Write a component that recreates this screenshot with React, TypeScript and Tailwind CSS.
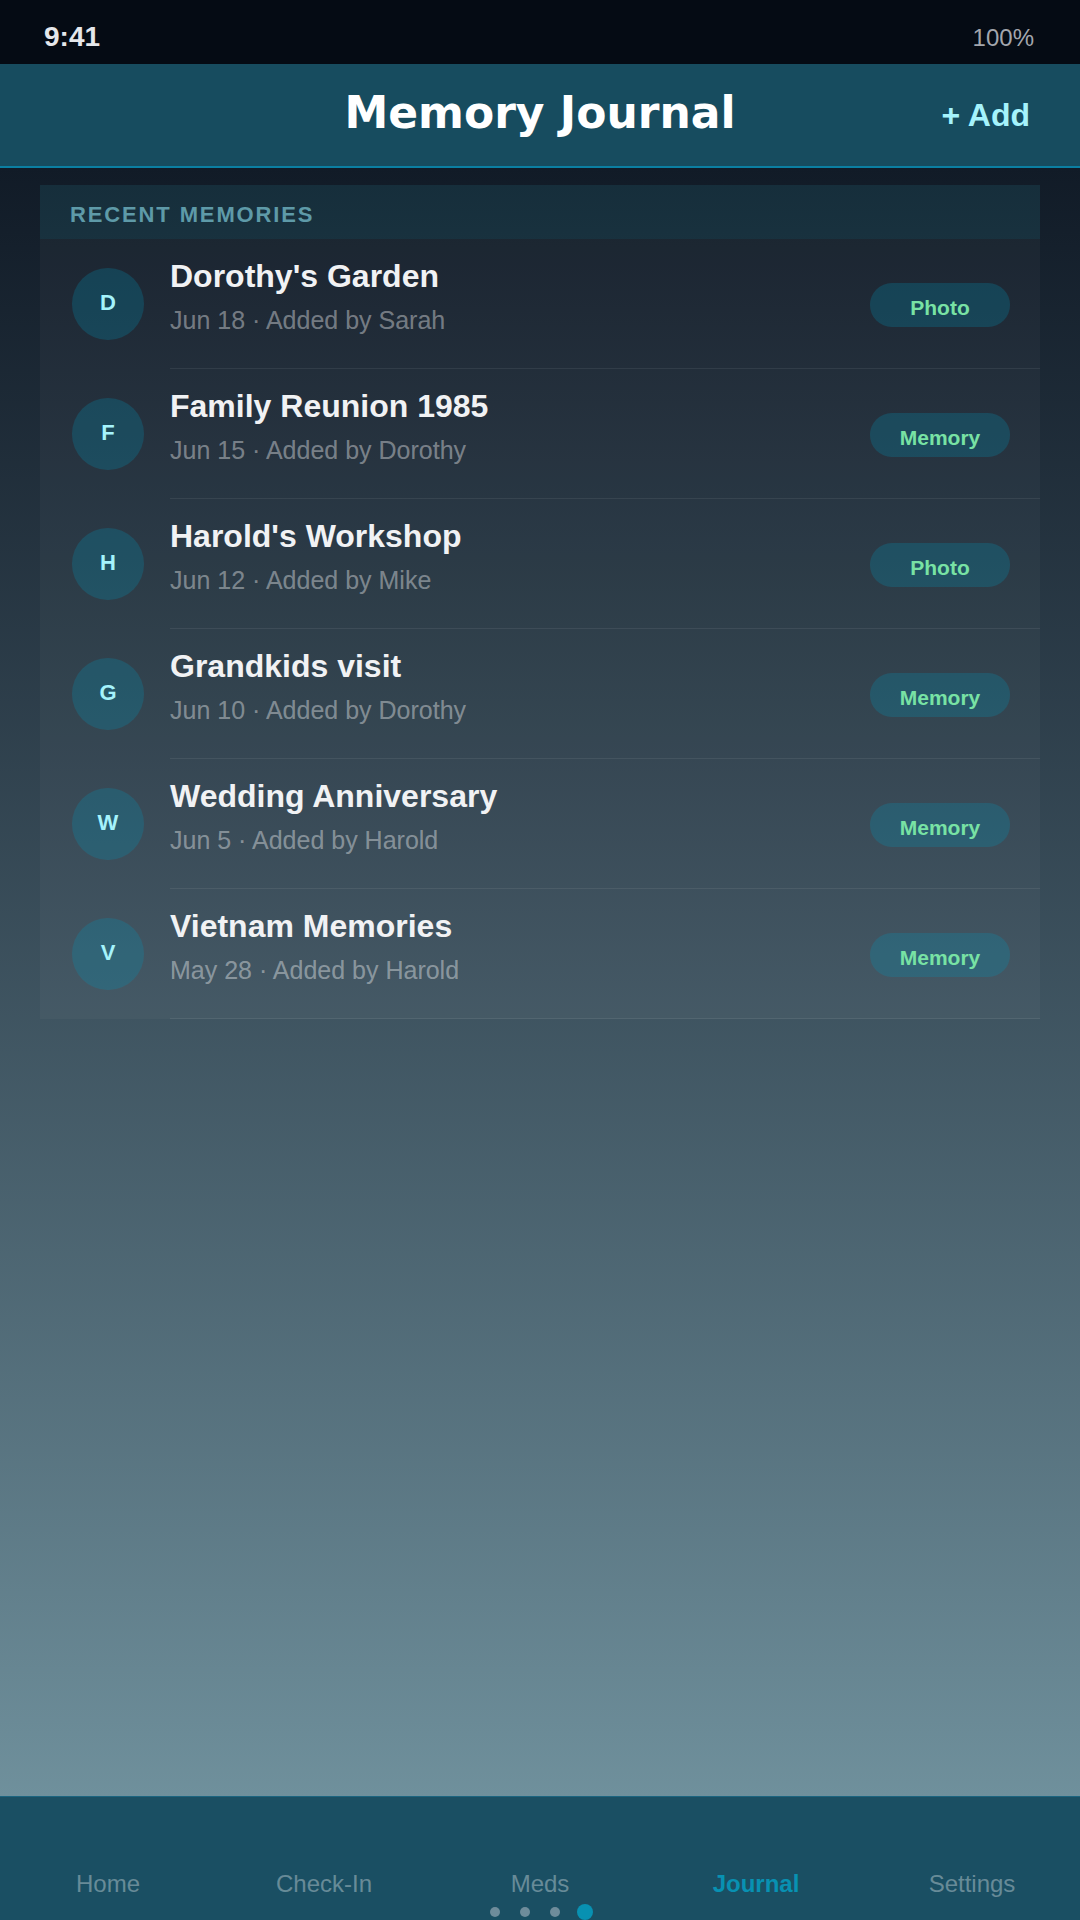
const memories = [
  { initial: "D", title: "Dorothy's Garden", date: "Jun 18", by: "Sarah", type: "Photo" },
  { initial: "F", title: "Family Reunion 1985", date: "Jun 15", by: "Dorothy", type: "Memory" },
  { initial: "H", title: "Harold's Workshop", date: "Jun 12", by: "Mike", type: "Photo" },
  { initial: "G", title: "Grandkids visit", date: "Jun 10", by: "Dorothy", type: "Memory" },
  { initial: "W", title: "Wedding Anniversary", date: "Jun 5", by: "Harold", type: "Memory" },
  { initial: "V", title: "Vietnam Memories", date: "May 28", by: "Harold", type: "Memory" },
];

const tabs = ["Home", "Check-In", "Meds", "Journal", "Settings"];

const App = () => {
  return (
    <div className="h-[1920px] w-[1080px] overflow-hidden flex flex-col bg-[#050b14] font-['Liberation_Sans',Arial,sans-serif]">
      {/* status bar */}
      <div className="h-16 shrink-0 flex items-baseline justify-between pt-[21px] pl-[44px] pr-[46px]">
        <span className="text-[28px] leading-8 font-bold text-[#e5e7eb]">9:41</span>
        <span className="text-[24px] leading-8 text-[#a3a6ad]">100%</span>
      </div>

      <header className="h-[104px] shrink-0 grid grid-cols-[1fr_auto_1fr] items-center bg-[#174c5f] border-b-2 border-[#0b7fa2]">
        <div />
        <h1 className="mb-1 font-['DejaVu_Sans',sans-serif] text-[44px] leading-none font-bold text-white">
          Memory Journal
        </h1>
        <button className="justify-self-end pr-[50px] text-[32px] leading-none font-bold text-[#a5f3fc]">
          + Add
        </button>
      </header>

      <main className="flex-1 px-10 pt-[17px] bg-linear-to-b from-[#111b27] to-[#6f909c]">
        <section className="bg-white/[0.03]">
          <h2 className="h-[54px] flex items-center pt-[5px] px-[30px] bg-cyan-600/10 text-[22px] font-bold tracking-[0.085em] text-[#5e9aa8]">
            RECENT MEMORIES
          </h2>
          {memories.map((m) => (
            <div key={m.title} className="flex h-[130px]">
              <div className="w-[130px] shrink-0 flex items-center pl-8">
                <div className="size-[72px] rounded-full pb-[3px] bg-cyan-600/25 flex items-center justify-center text-[22px] font-bold text-[#a5f3fc]">
                  {m.initial}
                </div>
              </div>
              <div className="flex-1 flex items-center justify-between border-b border-white/[0.07] pr-[30px]">
                <div className="self-start pt-[17px]">
                  <p className="text-[32px] leading-10 font-bold text-[#f1f2f4]">{m.title}</p>
                  <p className="mt-2 text-[25px] leading-8 text-white/40">
                    {m.date} · Added by {m.by}
                  </p>
                </div>
                <span className="mt-[3px] w-[140px] h-11 pt-[6px] rounded-full bg-cyan-600/25 flex items-center justify-center text-[21px] font-bold text-[#78e2a4]">
                  {m.type}
                </span>
              </div>
            </div>
          ))}
        </section>
      </main>

      <nav className="h-[124px] shrink-0 flex flex-col bg-[#1a4f63] border-t border-[#1c6580]">
        <div className="grid grid-cols-5 pt-[71px]">
          {tabs.map((t) => (
            <span
              key={t}
              className={
                t === "Journal"
                  ? "text-center text-[24px] leading-8 font-bold text-[#0891b2]"
                  : "text-center text-[24px] leading-8 text-white/35"
              }
            >
              {t}
            </span>
          ))}
        </div>
        <div className="mt-1 h-4 flex justify-center">
          {[0, 1, 2, 3].map((i) => (
            <div key={i} className="w-[30px] flex items-center justify-center">
              {i === 3 ? (
                <span className="size-4 rounded-full bg-[#0891b2]" />
              ) : (
                <span className="size-[10px] rounded-full bg-[#6e8c9b]" />
              )}
            </div>
          ))}
        </div>
      </nav>
    </div>
  );
};

export default App;
